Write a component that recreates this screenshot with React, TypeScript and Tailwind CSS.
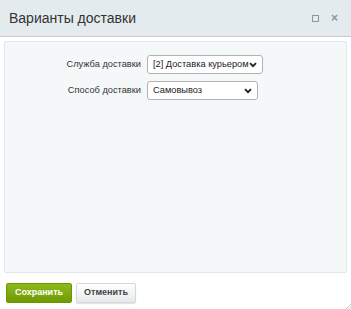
import React from 'react';

function Chevron() {
  return (
    <svg width="8" height="6" viewBox="0 0 8 6" className="shrink-0">
      <path d="M1 1.2l3 3 3-3" fill="none" stroke="#222" strokeWidth="1.9" />
    </svg>
  );
}

function Select({ value, width }: { value: string; width: string }) {
  return (
    <div
      className={`flex h-[19px] items-center justify-between rounded-[3px] border border-[#b3b3b3] bg-white pl-[5px] pr-[5px] text-[9.25px] text-[#222] ${width}`}
    >
      <span className="whitespace-nowrap">{value}</span>
      <Chevron />
    </div>
  );
}

export default function App() {
  return (
    <div
      className="relative flex h-[309px] w-[351px] flex-col bg-white"
      style={{ fontFamily: '"Liberation Sans", Arial, sans-serif' }}
    >
      <div className="flex h-[37px] shrink-0 items-center justify-between border-b border-[#c6cdd2] bg-[#e4ebee] pl-[9px] pr-[13px]">
        <span className="text-[14px] text-[#333]">Варианты доставки</span>
        <div className="flex items-center gap-[12px] text-[#8e979c]">
          <span className="block h-[7px] w-[7px] border border-[#8e979c]" />
          <span className="text-[12px] leading-none font-bold">×</span>
        </div>
      </div>

      <div className="mx-[4px] mt-[4px] h-[232px] rounded-[2px] border border-[#e0e6e9] bg-[#f5f8f9] pt-[13px]">
        <div className="grid grid-cols-[136px_auto] items-center gap-x-[6px] gap-y-[7px] text-[9.25px] text-[#333]">
          <span className="text-right">Служба доставки</span>
          <Select value="[2] Доставка курьером" width="w-[116px]" />
          <span className="text-right">Способ доставки</span>
          <Select value="Самовывоз" width="w-[111px]" />
        </div>
      </div>

      <div className="mt-[10px] flex gap-[4px] pl-[6px]">
        <button className="h-[20px] w-[66px] rounded-[2px] border border-[#6c9500] bg-gradient-to-b from-[#8fba1c] to-[#6f9a00] text-[9px] font-bold text-white">
          Сохранить
        </button>
        <button className="h-[20px] w-[60px] rounded-[2px] border border-[#d3d8db] bg-gradient-to-b from-white to-[#e6eaec] text-[9px] font-bold text-[#444] shadow-[0_1px_1px_rgba(0,0,0,0.12)]">
          Отменить
        </button>
      </div>

      <svg width="5" height="5" viewBox="0 0 5 5" className="absolute right-0 bottom-0">
        <path d="M5 0L0 5M5 2.5L2.5 5" stroke="#c3c8cb" strokeWidth="1" />
      </svg>
    </div>
  );
}
